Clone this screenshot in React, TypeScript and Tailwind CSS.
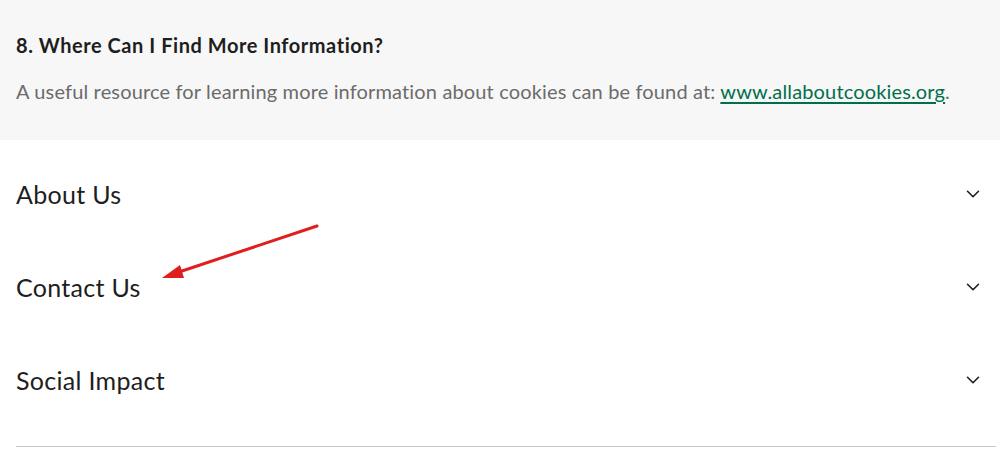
import { ChevronDown } from 'lucide-react';

const sections = ['About Us', 'Contact Us', 'Social Impact'];

export default function App() {
  return (
    <div className="relative h-[449px] w-[1000px] overflow-hidden bg-white font-['Lato',sans-serif] text-[#1e1e1e]">
      <div className="h-[140px] bg-[#f7f7f7] px-4 pt-[33px]">
        <h3 className="text-[20px] font-bold leading-[24px] tracking-[0.55px] text-[#1e1e1e]">
          8. Where Can I Find More Information?
        </h3>
        <p className="mt-[22px] text-[20px] leading-[24px] tracking-[0.15px] text-[#6b6b6b]">
          A useful resource for learning more information about cookies can be found at:{' '}
          <a href="#" className="text-[#00704a] underline underline-offset-[3px]">
            www.allaboutcookies.org
          </a>
          .
        </p>
      </div>

      <div className="ml-4 mr-[4px] border-b border-[#c8c8c8] pt-[7px] pb-[20px]">
        {sections.map((label) => (
          <div key={label} className="flex h-[93px] items-center justify-between">
            <span className="text-[25px] leading-[30px] tracking-[0.3px] text-[#1e1e1e]">{label}</span>
            <ChevronDown className="mr-[12px] h-[22px] w-[22px] text-[#1e1e1e]" strokeWidth={1.75} />
          </div>
        ))}
      </div>

      <svg
        className="pointer-events-none absolute left-0 top-0"
        width="1000"
        height="449"
        viewBox="0 0 1000 449"
      >
        <line x1="317" y1="226" x2="176" y2="273" stroke="#e01e1e" strokeWidth="3" strokeLinecap="round" />
        <polygon points="162,278 180,265 184,278" fill="#e01e1e" />
      </svg>
    </div>
  );
}
